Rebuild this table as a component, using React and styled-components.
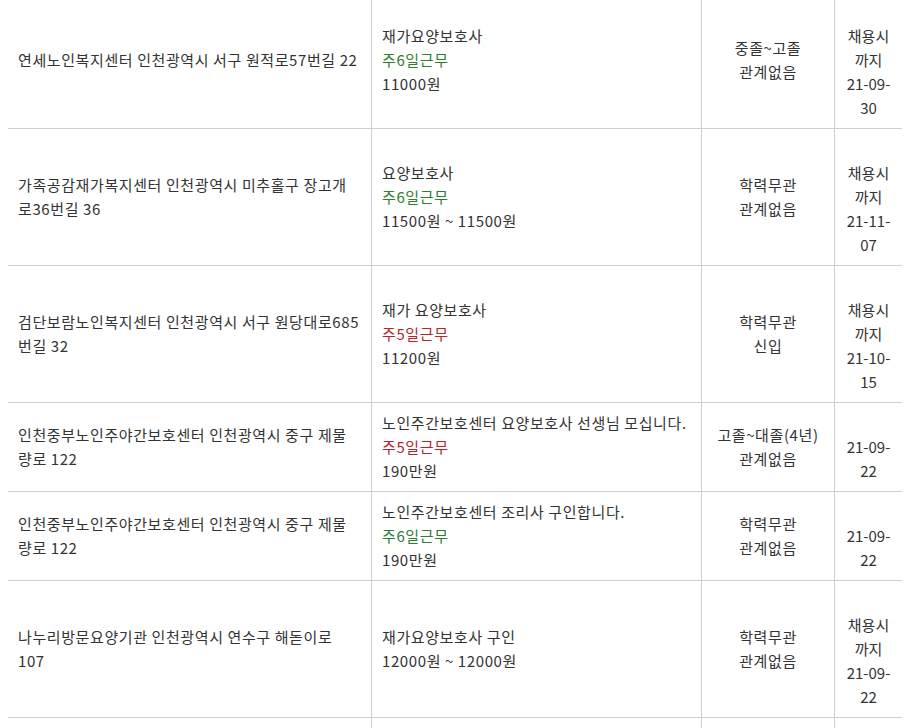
import React from 'react'
import styled, { createGlobalStyle } from 'styled-components'

const GlobalStyle = createGlobalStyle`
body{
    margin:0 8px;
    background:#fff;
    font-family:"Noto Sans CJK KR","Noto Sans",sans-serif;
    color:#333;
}
`

// 줄바꿈 위치는 원본 화면 그대로 맞춤
const jobs = [
    {
        place: "연세노인복지센터 인천광역시 서구 원적로57번길 22",
        title: "재가요양보호사",
        days: "주6일근무",
        pay: "11000원",
        edu: "중졸~고졸",
        career: "관계없음",
        until: "채용시까지",
        date: "21-09-30",
    },
    {
        place: "가족공감재가복지센터 인천광역시 미추홀구 장고개\n로36번길 36",
        title: "요양보호사",
        days: "주6일근무",
        pay: "11500원 ~ 11500원",
        edu: "학력무관",
        career: "관계없음",
        until: "채용시까지",
        date: "21-11-07",
    },
    {
        place: "검단보람노인복지센터 인천광역시 서구 원당대로685\n번길 32",
        title: "재가 요양보호사",
        days: "주5일근무",
        pay: "11200원",
        edu: "학력무관",
        career: "신입",
        until: "채용시까지",
        date: "21-10-15",
    },
    {
        place: "인천중부노인주야간보호센터 인천광역시 중구 제물\n량로 122",
        title: "노인주간보호센터 요양보호사 선생님 모십니다.",
        days: "주5일근무",
        pay: "190만원",
        edu: "고졸~대졸(4년)",
        career: "관계없음",
        date: "21-09-22",
    },
    {
        place: "인천중부노인주야간보호센터 인천광역시 중구 제물\n량로 122",
        title: "노인주간보호센터 조리사 구인합니다.",
        days: "주6일근무",
        pay: "190만원",
        edu: "학력무관",
        career: "관계없음",
        date: "21-09-22",
    },
    {
        place: "나누리방문요양기관 인천광역시 연수구 해돋이로\n107",
        title: "재가요양보호사 구인",
        pay: "12000원 ~ 12000원",
        edu: "학력무관",
        career: "관계없음",
        until: "채용시까지",
        date: "21-09-22",
    },
]

function App() {
    return (
        <>
            <GlobalStyle />
            <Table>
                <tbody>
                    {jobs.map((job, i) => (
                        <tr key={i}>
                            <Place>{job.place}</Place>
                            <Info>
                                <div>{job.title}</div>
                                {job.days && <Days five={job.days === "주5일근무"}>{job.days}</Days>}
                                <div>{job.pay}</div>
                            </Info>
                            <Edu>
                                <div>{job.edu}</div>
                                <div>{job.career}</div>
                            </Edu>
                            <Deadline>
                                <Blank />
                                {job.until && <div>{job.until}</div>}
                                <div>{job.date}</div>
                            </Deadline>
                        </tr>
                    ))}
                    <tr>
                        <Place><Blank /></Place>
                        <Info />
                        <Edu />
                        <Deadline />
                    </tr>
                </tbody>
            </Table>
        </>
    )
}

const Table = styled.table`
width:894px;
margin-top:-8px;
border-collapse:separate;
border-spacing:0;
table-layout:fixed;
font-size:15px;
letter-spacing:0.6px;
line-height:24px;

td{
    box-sizing:border-box;
    padding:8px 10px;
    vertical-align:middle;
    border-bottom:1px solid #cfcfcf;
}
`
const Place = styled.td`
width:364px;
white-space:pre;
border-right:1px solid #cfcfcf;
`
const Info = styled.td`
width:330px;
border-right:1px solid #cfcfcf;
`
const Edu = styled.td`
width:133px;
text-align:center;
border-right:1px solid #cfcfcf;
`
const Deadline = styled.td`
width:67px;
text-align:center;
letter-spacing:0;
`
const Blank = styled.div`
height:24px;
`
const Days = styled.div`
color:${p => p.five ? "#b3262b" : "#2e7d32"};
`

export default App
